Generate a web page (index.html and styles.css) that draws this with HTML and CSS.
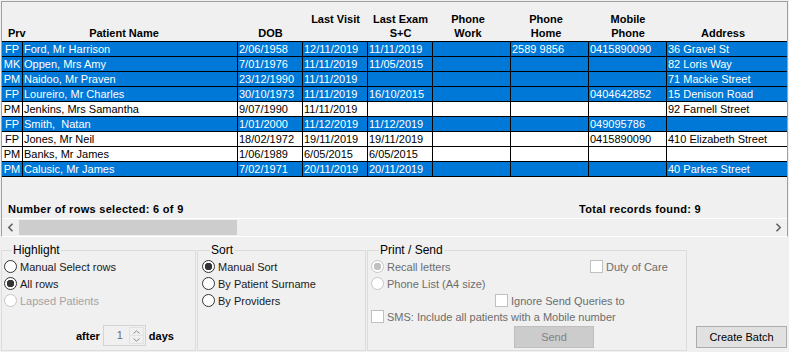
FILE: index.html
```html
<!DOCTYPE html>
<html lang="en">
<head>
  <meta charset="UTF-8" />
  <title>Recall List</title>
  <link rel="stylesheet" href="styles.css">
</head>
<body>

  <div class="grid-panel">
    <div class="cols grid-head">
      <div class="hcell hcell-prv">Prv</div>
      <div class="hcell hcell-name">Patient Name</div>
      <div class="hcell">DOB</div>
      <div class="hcell">Last Visit<br>&nbsp;</div>
      <div class="hcell">Last Exam<br>S+C</div>
      <div class="hcell hcell-shift">Phone<br>Work</div>
      <div class="hcell hcell-shift">Phone<br>Home</div>
      <div class="hcell">Mobile<br>Phone</div>
      <div class="hcell hcell-shift">Address</div>
    </div>

    <div class="grid-body">
      <div class="cols row sel">
        <div class="cell prv">FP</div><div class="cell">Ford, Mr Harrison</div><div class="cell">2/06/1958</div><div class="cell">12/11/2019</div><div class="cell">11/11/2019</div><div class="cell"></div><div class="cell">2589 9856</div><div class="cell">0415890090</div><div class="cell">36 Gravel St</div>
      </div>
      <div class="cols row sel">
        <div class="cell prv">MK</div><div class="cell">Oppen, Mrs Amy</div><div class="cell">7/01/1976</div><div class="cell">11/11/2019</div><div class="cell">11/05/2015</div><div class="cell"></div><div class="cell"></div><div class="cell"></div><div class="cell">82 Loris Way</div>
      </div>
      <div class="cols row sel">
        <div class="cell prv">PM</div><div class="cell">Naidoo, Mr Praven</div><div class="cell">23/12/1990</div><div class="cell">11/11/2019</div><div class="cell"></div><div class="cell"></div><div class="cell"></div><div class="cell"></div><div class="cell">71 Mackie Street</div>
      </div>
      <div class="cols row sel">
        <div class="cell prv">FP</div><div class="cell">Loureiro, Mr Charles</div><div class="cell">30/10/1973</div><div class="cell">11/11/2019</div><div class="cell">16/10/2015</div><div class="cell"></div><div class="cell"></div><div class="cell">0404642852</div><div class="cell">15 Denison Road</div>
      </div>
      <div class="cols row">
        <div class="cell prv">PM</div><div class="cell">Jenkins, Mrs Samantha</div><div class="cell">9/07/1990</div><div class="cell">11/11/2019</div><div class="cell"></div><div class="cell"></div><div class="cell"></div><div class="cell"></div><div class="cell">92 Farnell Street</div>
      </div>
      <div class="cols row sel">
        <div class="cell prv">FP</div><div class="cell">Smith,  Natan</div><div class="cell">1/01/2000</div><div class="cell">11/12/2019</div><div class="cell">11/12/2019</div><div class="cell"></div><div class="cell"></div><div class="cell">049095786</div><div class="cell"></div>
      </div>
      <div class="cols row">
        <div class="cell prv">FP</div><div class="cell">Jones, Mr Neil</div><div class="cell">18/02/1972</div><div class="cell">19/11/2019</div><div class="cell">19/11/2019</div><div class="cell"></div><div class="cell"></div><div class="cell">0415890090</div><div class="cell">410 Elizabeth Street</div>
      </div>
      <div class="cols row">
        <div class="cell prv">PM</div><div class="cell">Banks, Mr James</div><div class="cell">1/06/1989</div><div class="cell">6/05/2015</div><div class="cell">6/05/2015</div><div class="cell"></div><div class="cell"></div><div class="cell"></div><div class="cell"></div>
      </div>
      <div class="cols row sel">
        <div class="cell prv">PM</div><div class="cell">Calusic, Mr James</div><div class="cell">7/02/1971</div><div class="cell">20/11/2019</div><div class="cell">20/11/2019</div><div class="cell"></div><div class="cell"></div><div class="cell"></div><div class="cell">40 Parkes Street</div>
      </div>
    </div>

    <div class="grid-foot">
      <span>Number of rows selected: 6 of 9</span>
      <span class="total">Total records found: 9</span>
    </div>

    <div class="hscroll">
      <div class="hscroll-btn">
        <svg width="7" height="9" viewBox="0 0 7 9"><polyline points="5.5,0.8 1.8,4.5 5.5,8.2" fill="none" stroke="#606060" stroke-width="1.6"/></svg>
      </div>
      <div class="hscroll-track"><div class="hscroll-thumb"></div></div>
      <div class="hscroll-btn">
        <svg width="7" height="9" viewBox="0 0 7 9"><polyline points="1.5,0.8 5.2,4.5 1.5,8.2" fill="none" stroke="#606060" stroke-width="1.6"/></svg>
      </div>
    </div>
  </div>

  <div class="options">
    <fieldset class="group group-highlight">
      <legend>Highlight</legend>
      <label class="opt"><input type="radio" class="radio" name="hl"> Manual Select rows</label>
      <label class="opt"><input type="radio" class="radio" name="hl" checked> All rows</label>
      <label class="opt off"><input type="radio" class="radio" name="hl" disabled> Lapsed Patients</label>
      <div class="after-row">
        <b>after</b>
        <div class="spin">
          <span class="spin-value">1</span>
          <span class="spin-btns">
            <span class="spin-btn"><svg width="7" height="4" viewBox="0 0 7 4"><polyline points="0.5,3.5 3.5,0.8 6.5,3.5" fill="none" stroke="#8c8c8c" stroke-width="1"/></svg></span>
            <span class="spin-btn"><svg width="7" height="4" viewBox="0 0 7 4"><polyline points="0.5,0.5 3.5,3.2 6.5,0.5" fill="none" stroke="#8c8c8c" stroke-width="1"/></svg></span>
          </span>
        </div>
        <b>days</b>
      </div>
    </fieldset>

    <fieldset class="group group-sort">
      <legend>Sort</legend>
      <label class="opt"><input type="radio" class="radio" name="sort" checked> Manual Sort</label>
      <label class="opt"><input type="radio" class="radio" name="sort"> By Patient Surname</label>
      <label class="opt"><input type="radio" class="radio" name="sort"> By Providers</label>
    </fieldset>

    <fieldset class="group group-print">
      <legend>Print / Send</legend>
      <div class="print-top">
        <label class="opt dim"><input type="radio" class="radio" name="ps" checked disabled> Recall letters</label>
        <label class="opt dim"><input type="checkbox" class="check" disabled> Duty of Care</label>
      </div>
      <label class="opt dim"><input type="radio" class="radio" name="ps" disabled> Phone List (A4 size)</label>
      <label class="opt dim opt-ignore"><input type="checkbox" class="check" disabled> Ignore Send Queries to</label>
      <label class="opt dim opt-sms"><input type="checkbox" class="check" disabled> SMS: Include all patients with a Mobile number</label>
      <button class="btn btn-send" disabled>Send</button>
    </fieldset>

    <div class="batch">
      <button class="btn">Create Batch</button>
    </div>
  </div>

</body>
</html>
```

FILE: styles.css
```css
* {
  box-sizing: border-box;
}

body {
  margin: 0;
  width: 789px;
  height: 352px;
  overflow: hidden;
  background: #f0f0f0;
  font-family: "Liberation Sans", Arial, sans-serif;
  font-size: 11px;
  color: #000;
}

/* grid panel */

.grid-panel {
  margin: 1px 1px 0;
  border: 1px solid;
  border-color: #a0a0a0 #a0a0a0 #fff #a0a0a0;
}

.cols {
  display: grid;
  grid-template-columns: 21px 215px 65px 65px 65px 78px 78px 78px 1fr;
}

.grid-head {
  height: 40px;
  align-items: end;
  padding-bottom: 1px;
  border-bottom: 1px solid #000;
  font-weight: bold;
  line-height: 14px;
  text-align: center;
}

.hcell {
  white-space: nowrap;
}

.hcell-prv {
  text-align: left;
  padding-left: 6px;
}

.hcell-name {
  padding-right: 13px;
}

.hcell-shift {
  padding-right: 8px;
}

.row {
  height: 15px;
  border-bottom: 1px solid #000;
  background: #fff;
}

.row.sel {
  background: #0078d7;
  color: #fff;
}

.cell {
  line-height: 14px;
  padding-left: 1px;
  white-space: pre;
  overflow: hidden;
  border-right: 1px solid #000;
}

.cell:last-child {
  border-right: none;
}

.cell.prv {
  text-align: center;
  padding-left: 0;
}

.grid-foot {
  height: 41px;
  display: flex;
  padding: 25px 0 0 6px;
  font-weight: bold;
  line-height: 14px;
  letter-spacing: 0.3px;
}

.grid-foot .total {
  margin-left: auto;
  margin-right: 86px;
}

.hscroll {
  display: flex;
  height: 18px;
  border-top: 1px solid #fff;
}

.hscroll-btn {
  width: 17px;
  display: flex;
  align-items: center;
  justify-content: center;
}

.hscroll-track {
  flex: 1;
  padding-top: 1px;
}

.hscroll-thumb {
  width: 218px;
  height: 15px;
  background: #cdcdcd;
}

/* option groups */

.options {
  display: flex;
  gap: 1px;
  height: 115px;
  padding: 5px 0 0 1px;
}

.group {
  margin: 0;
  height: 109px;
  padding: 0;
  border: 1px solid #dcdcdc;
  min-width: 0;
}

.group legend {
  margin-left: 8px;
  padding: 0 1px;
  font-size: 12px;
  line-height: 16px;
}

.group-highlight {
  width: 195px;
  padding-left: 2px;
}

.group-sort {
  width: 169px;
  padding-left: 4px;
}

.group-print {
  width: 320px;
  padding-left: 3px;
}

.opt {
  display: flex;
  align-items: center;
  gap: 3px;
  height: 17px;
  color: #1a1a1a;
  white-space: nowrap;
}

.opt.off {
  color: #a3a3a3;
}

.opt.dim {
  color: #6d6d6d;
}

.radio {
  -webkit-appearance: none;
  appearance: none;
  flex: none;
  margin: 0;
  width: 13px;
  height: 13px;
  border: 1px solid #333;
  border-radius: 50%;
  background: #fff;
}

.radio:checked {
  background: radial-gradient(circle, #333 0 3.5px, #fff 4px);
}

.radio:disabled {
  border-color: #c6c6c6;
}

.radio:disabled:checked {
  background: radial-gradient(circle, #c0c0c0 0 3.5px, #fff 4px);
}

.check {
  -webkit-appearance: none;
  appearance: none;
  flex: none;
  margin: 0;
  width: 13px;
  height: 13px;
  border: 1px solid #c0c0c0;
  background: #fff;
}

.after-row {
  display: flex;
  align-items: center;
  gap: 3px;
  margin-top: 16px;
  padding-left: 72px;
}

.spin {
  display: flex;
  width: 43px;
  height: 21px;
  border: 1px solid #d4d4d4;
  background: #f0f0f0;
}

.spin-value {
  flex: 1;
  text-align: right;
  padding-right: 6px;
  line-height: 19px;
  color: #6d6d6d;
}

.spin-btns {
  display: flex;
  flex-direction: column;
  width: 16px;
  padding: 1px 1px 1px 0;
}

.spin-btn {
  flex: 1;
  display: flex;
  align-items: center;
  justify-content: center;
  border: 1px solid #e2e2e2;
}

.spin-btn + .spin-btn {
  border-top: none;
}

.print-top {
  display: grid;
  grid-template-columns: 219px auto;
}

.opt-ignore {
  padding-left: 124px;
}

.opt-sms {
  height: 15px;
}

.btn {
  font: inherit;
  height: 22px;
  padding: 0;
  border: 1px solid #adadad;
  background: #e1e1e1;
  color: #000;
}

.btn-send {
  display: block;
  width: 80px;
  margin: 2px 0 0 143px;
  border-color: #bfbfbf;
  background: #cccccc;
  color: #838383;
}

.batch {
  flex: 1;
  display: flex;
  align-items: flex-end;
  justify-content: flex-end;
  padding: 0 2px 4px 0;
}

.batch .btn {
  width: 91px;
}
```
